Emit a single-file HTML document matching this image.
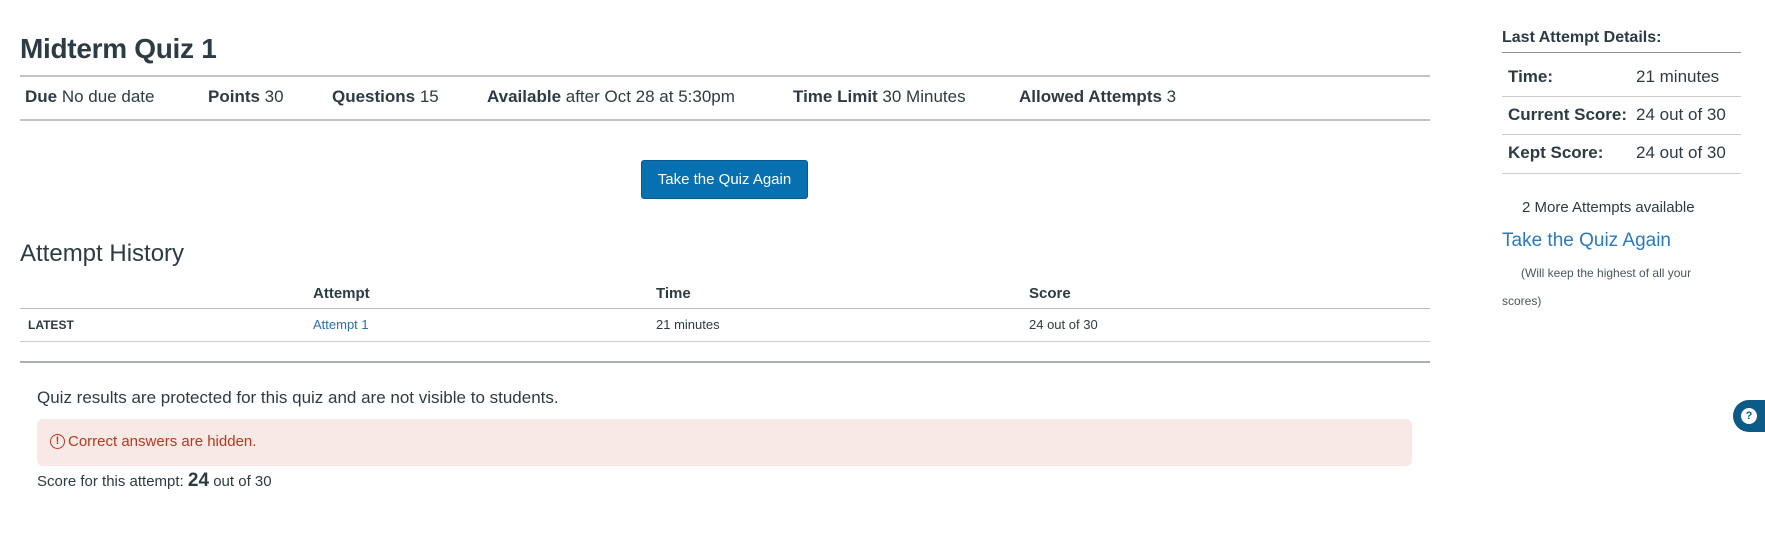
<!DOCTYPE html>
<html><head><meta charset="utf-8"><style>
*{margin:0;padding:0;box-sizing:border-box}
body{width:1765px;height:535px;background:#fff;font-family:"Liberation Sans",sans-serif;color:#2d3b45;position:relative;overflow:hidden}
.a{position:absolute;white-space:nowrap}
.hl{position:absolute;height:1px;background:#c7cdd1}
b{font-weight:bold}
</style></head><body>
<div class="a" style="left:20px;top:33px;font-size:28px;font-weight:bold;letter-spacing:-0.3px">Midterm Quiz 1</div>
<div class="hl" style="left:20px;top:75px;width:1410px;background:#c0c4c7;height:2px"></div>
<div class="a" style="left:25px;top:87px;font-size:17px"><b>Due</b> No due date</div>
<div class="a" style="left:208px;top:87px;font-size:17px"><b>Points</b> 30</div>
<div class="a" style="left:332px;top:87px;font-size:17px"><b>Questions</b> 15</div>
<div class="a" style="left:487px;top:87px;font-size:17px"><b>Available</b> after Oct 28 at 5:30pm</div>
<div class="a" style="left:793px;top:87px;font-size:17px"><b>Time Limit</b> 30 Minutes</div>
<div class="a" style="left:1019px;top:87px;font-size:17px"><b>Allowed Attempts</b> 3</div>
<div class="hl" style="left:20px;top:119px;width:1410px;background:#c0c4c7;height:2px"></div>
<div class="a" style="left:641px;top:160px;width:167px;height:39px;background:#0770b0;border:1px solid #065a8e;border-radius:3px;color:#fff;font-size:15px;text-align:center;line-height:37px">Take the Quiz Again</div>
<div class="a" style="left:20px;top:240px;font-size:24px;font-weight:300">Attempt History</div>
<div class="a" style="left:313px;top:285px;font-size:15px;font-weight:bold">Attempt</div>
<div class="a" style="left:656px;top:285px;font-size:15px;font-weight:bold">Time</div>
<div class="a" style="left:1029px;top:285px;font-size:15px;font-weight:bold">Score</div>
<div class="hl" style="left:20px;top:308px;width:1410px;background:#b8bcbf"></div>
<div class="a" style="left:28px;top:318px;font-size:12px;font-weight:bold">LATEST</div>
<div class="a" style="left:313px;top:317px;font-size:13px;color:#2b6fb0">Attempt 1</div>
<div class="a" style="left:656px;top:317px;font-size:13px">21 minutes</div>
<div class="a" style="left:1029px;top:317px;font-size:13px">24 out of 30</div>
<div class="hl" style="left:20px;top:341px;width:1410px"></div>
<div class="hl" style="left:20px;top:361px;width:1410px;background:#a9aeb1;height:2px"></div>
<div class="a" style="left:37px;top:388px;font-size:17px">Quiz results are protected for this quiz and are not visible to students.</div>
<div class="a" style="left:37px;top:419px;width:1375px;height:47px;background:#f8e8e6;border-radius:6px"></div>
<div class="a" style="left:50px;top:433px;font-size:15px;color:#b6391e;display:flex;align-items:center;gap:3px"><span style="display:inline-block;width:15px;height:15px;border:1.5px solid #b6391e;border-radius:50%;font-size:11px;line-height:12px;text-align:center;font-weight:bold">!</span>Correct answers are hidden.</div>
<div class="a" style="left:37px;top:470px;font-size:15px">Score for this attempt: <span style="font-size:19px;font-weight:bold">24</span> out of 30</div>

<div class="a" style="left:1502px;top:29px;font-size:16px;font-weight:bold">Last Attempt Details:</div>
<div class="hl" style="left:1502px;top:52px;width:239px;background:#8b9397"></div>
<div class="a" style="left:1508px;top:67px;font-size:17px;font-weight:bold">Time:</div>
<div class="a" style="left:1636px;top:67px;font-size:17px">21 minutes</div>
<div class="hl" style="left:1502px;top:96px;width:239px"></div>
<div class="a" style="left:1508px;top:105px;font-size:17px;font-weight:bold">Current Score:</div>
<div class="a" style="left:1636px;top:105px;font-size:17px">24 out of 30</div>
<div class="hl" style="left:1502px;top:134px;width:239px"></div>
<div class="a" style="left:1508px;top:143px;font-size:17px;font-weight:bold">Kept Score:</div>
<div class="a" style="left:1636px;top:143px;font-size:17px">24 out of 30</div>
<div class="hl" style="left:1502px;top:173px;width:239px"></div>
<div class="a" style="left:1522px;top:199px;font-size:15px">2 More Attempts available</div>
<div class="a" style="left:1502px;top:230px;font-size:19px;color:#2b7abc">Take the Quiz Again</div>
<div class="a" style="left:1521px;top:266px;font-size:12px;color:#4a565e">(Will keep the highest of all your</div>
<div class="a" style="left:1502px;top:294px;font-size:12px;color:#4a565e">scores)</div>
<div class="a" style="left:1733px;top:400px;width:40px;height:32px;background:#0b5a87;border-radius:16px 0 0 16px"></div>
<div class="a" style="left:1741px;top:408px;width:16px;height:16px;background:#fff;border-radius:50%;color:#0b5a87;font-size:11px;font-weight:bold;text-align:center;line-height:16px">?</div>
</body></html>
